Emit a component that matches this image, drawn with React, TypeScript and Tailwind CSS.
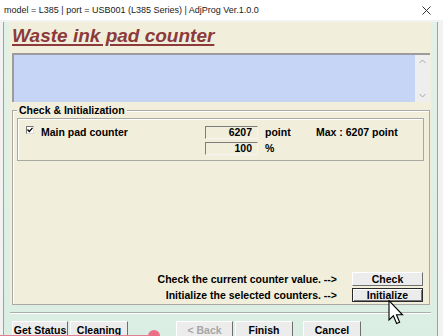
const btn =
  "flex items-center justify-center bg-[#ececec] border border-t-white border-l-white border-r-[#6f6f6f] border-b-[#6f6f6f] text-[10.5px] font-bold leading-none";

function Chevron({ up }: { up?: boolean }) {
  return (
    <svg width="7" height="5" viewBox="0 0 7 5" className="text-[#a8a8a8]">
      <path d={up ? "M0.5 4 L3.5 1 L6.5 4" : "M0.5 1 L3.5 4 L6.5 1"} fill="none" stroke="currentColor" strokeWidth="1" />
    </svg>
  );
}

export default function App() {
  return (
    <div className="relative w-[443px] h-[336px] overflow-hidden bg-[#f2f2f2] font-['Liberation_Sans',Arial,sans-serif] text-black">
      {/* title bar */}
      <div className="flex h-[20px] items-center justify-between bg-white pl-[4px] pr-[12px]">
        <span className="text-[9px] text-[#1a1a1a] leading-none">
          model = L385 | port = USB001 (L385 Series) | AdjProg Ver.1.0.0
        </span>
        <svg width="9" height="9" viewBox="0 0 9 9">
          <path d="M0.5 0.5 L8.5 8.5 M8.5 0.5 L0.5 8.5" stroke="#333" strokeWidth="1" />
        </svg>
      </div>

      {/* window body */}
      <div className="ml-[3px] w-[435px] h-[316px] border-x border-[#9aa59e] bg-gradient-to-b from-[#e2f1e6] to-[#dbeee3]">
        <div className="ml-[6px] mt-[2px] w-[421px] h-[283px] bg-[#f1efdb]">
          <div className="h-[31px] pl-[2px] pt-[2px]">
            <span className="text-[19px] font-bold italic text-[#8c3a3a] underline decoration-[2px] underline-offset-[2px] leading-[24px]">
              Waste ink pad counter
            </span>
          </div>

          {/* log box */}
          <div className="ml-[2px] flex w-[418px] h-[49px] border-t-2 border-l-2 border-[#9c9c9c] bg-[#c6d4f6]">
            <div className="flex-1" />
            <div className="flex w-[15px] flex-col items-center justify-between bg-[#eeeeee] py-[4px]">
              <Chevron up />
              <Chevron />
            </div>
          </div>

          {/* group box */}
          <div className="relative ml-[2px] mt-[8px] flex w-[418px] h-[195px] flex-col border border-[#a9a9a3] shadow-[inset_1px_1px_0_#fff]">
            <span className="absolute left-[4px] top-[-7px] bg-[#f1efdb] px-[2px] text-[10.5px] font-bold leading-[12px]">
              Check &amp; Initialization
            </span>

            <div className="ml-[4px] mt-[7px] w-[407px] h-[43px] border border-[#a9a9a3] shadow-[inset_1px_1px_0_#fff] pt-[7px] text-[10.5px] font-bold leading-none">
              <div className="flex h-[13px] items-center">
                <div className="ml-[8px] mb-[6px] flex h-[8px] w-[8px] items-center justify-center border border-t-[#777] border-l-[#777] border-r-[#ddd] border-b-[#ddd] bg-white">
                  <svg width="6" height="6" viewBox="0 0 6 6">
                    <path d="M0.5 2.5 L2.3 4.5 L5.5 0.8" fill="none" stroke="#000" strokeWidth="1.2" />
                  </svg>
                </div>
                <span className="ml-[7px] w-[164px]">Main pad counter</span>
                <div className="flex h-[13px] w-[53px] items-center justify-end border border-t-[#7c7c7c] border-l-[#7c7c7c] border-r-[#f4f4f4] border-b-[#f4f4f4] pr-[5px]">
                  6207
                </div>
                <span className="ml-[7px] w-[51px]">point</span>
                <span>Max : 6207 point</span>
              </div>
              <div className="mt-[3px] flex h-[13px] items-center">
                <div className="ml-[187px] flex h-[13px] w-[53px] items-center justify-end border border-t-[#7c7c7c] border-l-[#7c7c7c] border-r-[#f4f4f4] border-b-[#f4f4f4] pr-[5px]">
                  100
                </div>
                <span className="ml-[7px]">%</span>
              </div>
            </div>

            <div className="flex-1" />

            <div className="flex flex-col gap-[2px] pb-[2px] pr-[6px] text-[10.5px] font-bold leading-none">
              <div className="flex items-center justify-end">
                <span className="mr-[15px]">Check the current counter value. --&gt;</span>
                <div className={`${btn} w-[71px] h-[14px]`}>Check</div>
              </div>
              <div className="flex items-center justify-end">
                <span className="mr-[15px]">Initialize the selected counters. --&gt;</span>
                <div className="flex w-[71px] h-[14px] items-center justify-center border border-[#2a2a2a] bg-[#ececec] shadow-[inset_1px_1px_0_#fff,inset_-1px_-1px_0_#777] text-[10.5px] font-bold leading-none">
                  Initialize
                </div>
              </div>
            </div>
          </div>
        </div>

        {/* separator */}
        <div className="ml-[6px] mt-[7px] w-[421px] border-t border-b border-t-[#a9b0ab] border-b-white" />

        {/* bottom buttons */}
        <div className="mt-[7px] flex">
          <div className={`${btn} ml-[8px] w-[56px] h-[18px]`}>Get Status</div>
          <div className={`${btn} ml-[2px] w-[58px] h-[18px]`}>Cleaning</div>
          <div className={`${btn} ml-[48px] w-[57px] h-[18px] text-[#a6a6a6]`}>&lt; Back</div>
          <div className={`${btn} ml-[2px] w-[58px] h-[18px]`}>Finish</div>
          <div className={`${btn} ml-[10px] w-[58px] h-[18px]`}>Cancel</div>
        </div>
      </div>

      {/* recording overlay */}
      <div className="absolute bottom-0 left-0 h-[1px] w-[150px] bg-[#e3808f]" />
      <div className="absolute left-[148px] top-[330px] h-[12px] w-[12px] rounded-full bg-[#ec6f86]" />

      {/* mouse cursor */}
      <svg className="absolute left-[388px] top-[300px]" width="17" height="25" viewBox="0 0 13 20">
        <path d="M0.5 0.5 L0.5 16 L4 12.6 L6.6 18.8 L9 17.8 L6.5 11.8 L11.3 11.8 Z" fill="#fff" stroke="#000" strokeWidth="0.9" strokeLinejoin="miter" />
      </svg>
    </div>
  );
}
